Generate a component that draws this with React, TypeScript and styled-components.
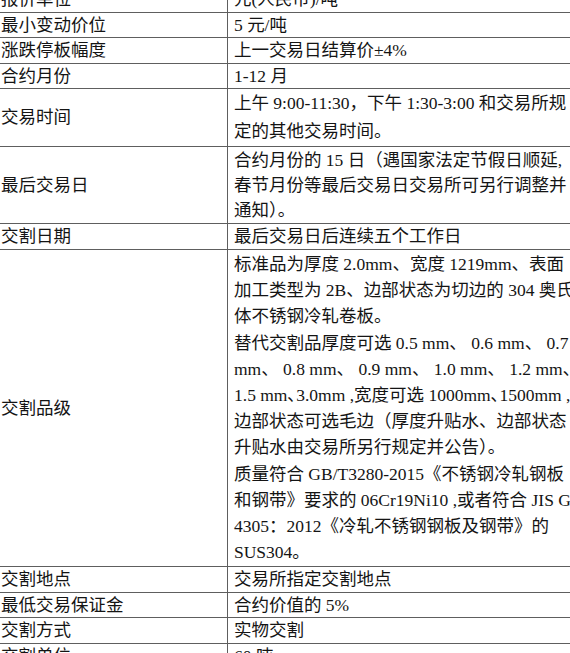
import styled, { createGlobalStyle } from "styled-components";

const GlobalStyle = createGlobalStyle`
  html, body {
    margin: 0;
    padding: 0;
    background: #fff;
    overflow: hidden;
  }
`;

const Sheet = styled.table`
  margin-top: -14px;
  border-collapse: collapse;
  table-layout: fixed;
  width: 600px;
  font-family: "Liberation Serif", "Noto Sans CJK SC", serif;
  font-size: 17.5px;
  color: #141414;
`;

const Row = styled.tr``;

const LabelCell = styled.td`
  width: 226px;
  padding: 0 0 0 1px;
  border: 1px solid #5e5e5e;
  border-left: none;
  vertical-align: middle;
  white-space: nowrap;
  line-height: 24.5px;
`;

const ValueCell = styled.td<{ $lh: number }>`
  padding: ${(p) => (p.$lh > 24.5 ? "1px 0 1px 6px" : "0 0 0 6px")};
  border: 1px solid #5e5e5e;
  vertical-align: middle;
  line-height: ${(p) => p.$lh}px;
`;

const Line = styled.div`
  white-space: nowrap;
`;

type Spec = { label: string; lines: string[]; lh?: number };

const rows: Spec[] = [
  { label: "报价单位", lines: ["元(人民币)/吨"] },
  { label: "最小变动价位", lines: ["5 元/吨"] },
  { label: "涨跌停板幅度", lines: ["上一交易日结算价±4%"] },
  { label: "合约月份", lines: ["1-12 月"] },
  {
    label: "交易时间",
    lh: 27.5,
    lines: ["上午 9:00-11:30，下午 1:30-3:00 和交易所规", "定的其他交易时间。"],
  },
  {
    label: "最后交易日",
    lh: 24.8,
    lines: [
      "合约月份的 15 日（遇国家法定节假日顺延,",
      "春节月份等最后交易日交易所可另行调整并",
      "通知）。",
    ],
  },
  { label: "交割日期", lines: ["最后交易日后连续五个工作日"] },
  {
    label: "交割品级",
    lh: 26.2,
    lines: [
      "标准品为厚度 2.0mm、宽度 1219mm、表面",
      "加工类型为 2B、边部状态为切边的 304 奥氏",
      "体不锈钢冷轧卷板。",
      "替代交割品厚度可选 0.5 mm、 0.6 mm、 0.7",
      "mm、 0.8 mm、 0.9 mm、 1.0 mm、 1.2 mm、",
      "1.5 mm､3.0mm ,宽度可选 1000mm､1500mm ,",
      "边部状态可选毛边（厚度升贴水、边部状态",
      "升贴水由交易所另行规定并公告）。",
      "质量符合 GB/T3280-2015《不锈钢冷轧钢板",
      "和钢带》要求的 06Cr19Ni10 ,或者符合 JIS G",
      "4305：2012《冷轧不锈钢钢板及钢带》的",
      "SUS304。",
    ],
  },
  { label: "交割地点", lines: ["交易所指定交割地点"] },
  { label: "最低交易保证金", lines: ["合约价值的 5%"] },
  { label: "交割方式", lines: ["实物交割"] },
  { label: "交割单位", lines: ["60 吨"] },
];

export default function App() {
  return (
    <>
      <GlobalStyle />
      <Sheet>
        <tbody>
          {rows.map((r) => (
            <Row key={r.label}>
              <LabelCell>{r.label}</LabelCell>
              <ValueCell $lh={r.lh ?? 24.5}>
                {r.lines.map((l, i) => (
                  <Line key={i}>{l}</Line>
                ))}
              </ValueCell>
            </Row>
          ))}
        </tbody>
      </Sheet>
    </>
  );
}
